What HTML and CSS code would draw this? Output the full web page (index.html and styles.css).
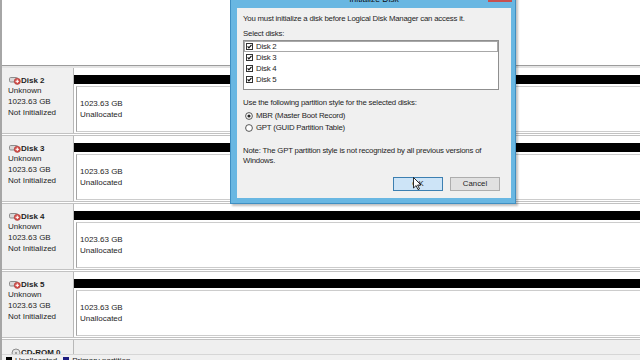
FILE: index.html
```html
<!DOCTYPE html>
<html lang="en">
<head>
    <meta charset="UTF-8">
    <meta name="viewport" content="width=device-width, initial-scale=1.0">
    <title>Disk Management</title>
    <link rel="stylesheet" href="styles.css">
</head>
<body>

    <div class="console">
        <div class="top-pane"></div>
        <div class="splitter"></div>

        <div class="disk-list">
            <div class="disk-row">
                <div class="disk-label">
                    <div class="disk-name">
                        <svg class="disk-icon" viewBox="0 0 12 9" width="12" height="9">
                            <rect x="0.5" y="1.5" width="8" height="4.5" rx="1.2" fill="#d9d9d9" stroke="#8c8c8c"/>
                            <circle cx="8.3" cy="5.3" r="3.1" fill="#d4504c" stroke="#a83a36" stroke-width="0.6"/>
                            <path d="M8.3 3.6v3.4M6.6 5.3h3.4" stroke="#fff" stroke-width="1"/>
                        </svg>
                        <span>Disk 2</span>
                    </div>
                    <div>Unknown</div>
                    <div>1023.63 GB</div>
                    <div>Not Initialized</div>
                </div>
                <div class="disk-map">
                    <div class="disk-bar"></div>
                    <div class="volume">
                        <div>1023.63 GB</div>
                        <div>Unallocated</div>
                    </div>
                </div>
            </div>

            <div class="disk-row">
                <div class="disk-label">
                    <div class="disk-name">
                        <svg class="disk-icon" viewBox="0 0 12 9" width="12" height="9">
                            <rect x="0.5" y="1.5" width="8" height="4.5" rx="1.2" fill="#d9d9d9" stroke="#8c8c8c"/>
                            <circle cx="8.3" cy="5.3" r="3.1" fill="#d4504c" stroke="#a83a36" stroke-width="0.6"/>
                            <path d="M8.3 3.6v3.4M6.6 5.3h3.4" stroke="#fff" stroke-width="1"/>
                        </svg>
                        <span>Disk 3</span>
                    </div>
                    <div>Unknown</div>
                    <div>1023.63 GB</div>
                    <div>Not Initialized</div>
                </div>
                <div class="disk-map">
                    <div class="disk-bar"></div>
                    <div class="volume">
                        <div>1023.63 GB</div>
                        <div>Unallocated</div>
                    </div>
                </div>
            </div>

            <div class="disk-row">
                <div class="disk-label">
                    <div class="disk-name">
                        <svg class="disk-icon" viewBox="0 0 12 9" width="12" height="9">
                            <rect x="0.5" y="1.5" width="8" height="4.5" rx="1.2" fill="#d9d9d9" stroke="#8c8c8c"/>
                            <circle cx="8.3" cy="5.3" r="3.1" fill="#d4504c" stroke="#a83a36" stroke-width="0.6"/>
                            <path d="M8.3 3.6v3.4M6.6 5.3h3.4" stroke="#fff" stroke-width="1"/>
                        </svg>
                        <span>Disk 4</span>
                    </div>
                    <div>Unknown</div>
                    <div>1023.63 GB</div>
                    <div>Not Initialized</div>
                </div>
                <div class="disk-map">
                    <div class="disk-bar"></div>
                    <div class="volume">
                        <div>1023.63 GB</div>
                        <div>Unallocated</div>
                    </div>
                </div>
            </div>

            <div class="disk-row">
                <div class="disk-label">
                    <div class="disk-name">
                        <svg class="disk-icon" viewBox="0 0 12 9" width="12" height="9">
                            <rect x="0.5" y="1.5" width="8" height="4.5" rx="1.2" fill="#d9d9d9" stroke="#8c8c8c"/>
                            <circle cx="8.3" cy="5.3" r="3.1" fill="#d4504c" stroke="#a83a36" stroke-width="0.6"/>
                            <path d="M8.3 3.6v3.4M6.6 5.3h3.4" stroke="#fff" stroke-width="1"/>
                        </svg>
                        <span>Disk 5</span>
                    </div>
                    <div>Unknown</div>
                    <div>1023.63 GB</div>
                    <div>Not Initialized</div>
                </div>
                <div class="disk-map">
                    <div class="disk-bar"></div>
                    <div class="volume">
                        <div>1023.63 GB</div>
                        <div>Unallocated</div>
                    </div>
                </div>
            </div>

            <div class="disk-row cdrom-row">
                <div class="disk-label">
                    <div class="disk-name">
                        <svg class="disk-icon cd-icon" viewBox="0 0 12 9" width="12" height="9">
                            <circle cx="7" cy="5" r="4" fill="#e4e4e4" stroke="#8c8c8c"/>
                            <circle cx="7" cy="5" r="1" fill="#8c8c8c"/>
                        </svg>
                        <span>CD-ROM 0</span>
                    </div>
                </div>
                <div class="disk-map"></div>
            </div>
        </div>

        <div class="legend">
            <span class="swatch swatch-black"></span>
            <span class="legend-text">Unallocated</span>
            <span class="swatch swatch-navy"></span>
            <span class="legend-text">Primary partition</span>
        </div>
    </div>

    <div class="dialog">
        <div class="dialog-title">Initialize Disk</div>
        <div class="close-btn"></div>
        <div class="dialog-body">
            <div class="intro">You must initialize a disk before Logical Disk Manager can access it.</div>
            <div class="field-label">Select disks:</div>
            <div class="disk-picker">
                <div class="pick-row selected">
                    <svg class="check" viewBox="0 0 7 7" width="7" height="7"><rect x="0.5" y="0.5" width="6" height="6" fill="#fff" stroke="#333"/><path d="M1.6 3.4l1.3 1.4 2.6-3" fill="none" stroke="#111" stroke-width="1.2"/></svg>
                    <span>Disk 2</span>
                </div>
                <div class="pick-row">
                    <svg class="check" viewBox="0 0 7 7" width="7" height="7"><rect x="0.5" y="0.5" width="6" height="6" fill="#fff" stroke="#333"/><path d="M1.6 3.4l1.3 1.4 2.6-3" fill="none" stroke="#111" stroke-width="1.2"/></svg>
                    <span>Disk 3</span>
                </div>
                <div class="pick-row">
                    <svg class="check" viewBox="0 0 7 7" width="7" height="7"><rect x="0.5" y="0.5" width="6" height="6" fill="#fff" stroke="#333"/><path d="M1.6 3.4l1.3 1.4 2.6-3" fill="none" stroke="#111" stroke-width="1.2"/></svg>
                    <span>Disk 4</span>
                </div>
                <div class="pick-row">
                    <svg class="check" viewBox="0 0 7 7" width="7" height="7"><rect x="0.5" y="0.5" width="6" height="6" fill="#fff" stroke="#333"/><path d="M1.6 3.4l1.3 1.4 2.6-3" fill="none" stroke="#111" stroke-width="1.2"/></svg>
                    <span>Disk 5</span>
                </div>
            </div>

            <div class="style-label">Use the following partition style for the selected disks:</div>
            <div class="radio-row first">
                <svg class="radio" viewBox="0 0 8 8" width="8" height="8"><circle cx="4" cy="4" r="3.4" fill="#fff" stroke="#444" stroke-width="0.9"/><circle cx="4" cy="4" r="1.6" fill="#222"/></svg>
                <span>MBR (Master Boot Record)</span>
            </div>
            <div class="radio-row">
                <svg class="radio" viewBox="0 0 8 8" width="8" height="8"><circle cx="4" cy="4" r="3.4" fill="#fff" stroke="#444" stroke-width="0.9"/></svg>
                <span>GPT (GUID Partition Table)</span>
            </div>

            <div class="note">Note: The GPT partition style is not recognized by all previous versions of<br>Windows.</div>

            <div class="buttons">
                <div class="btn btn-ok">OK</div>
                <div class="btn">Cancel</div>
            </div>
        </div>
    </div>

    <svg class="cursor" viewBox="0 0 9 13" width="9" height="13">
        <path d="M0.5 0.5v10.5l2.6-2.4 1.9 4 1.5-0.7-1.9-3.9h3.4z" fill="#fff" stroke="#000" stroke-width="0.8"/>
    </svg>

</body>
</html>
```

FILE: styles.css
```css
body {
    margin: 0;
    width: 640px;
    height: 360px;
    overflow: hidden;
    position: relative;
    background: #fff;
    color: #1e1e1e;
    font-family: "Liberation Sans", Arial, sans-serif;
    font-size: 8px;
}

.console {
    display: grid;
    grid-template-rows: 65px 3px 286px 20px;
    border-left: 2px solid #a6a6a6;
}

.top-pane {
    background: #fff;
}

.splitter {
    border-top: 1px solid #9c9c9c;
    background: #e4e4e4;
}

.disk-list {
    overflow: hidden;
}

.disk-row {
    display: flex;
    height: 68px;
    box-sizing: border-box;
    border-bottom: 3px double #c2c2c2;
}

.disk-label {
    width: 72px;
    box-sizing: border-box;
    background: #f0f0f0;
    border-right: 1px solid #b8b8b8;
    padding: 7.5px 0 0 6px;
    line-height: 10.7px;
}

.disk-name {
    display: flex;
    align-items: center;
    font-weight: bold;
}

.disk-icon {
    margin: 0 0 0 1px;
}

.disk-map {
    flex: 1;
    padding-top: 7px;
}

.disk-bar {
    height: 9px;
    background: #000;
}

.volume {
    margin: 2px 0 0 2px;
    height: 46px;
    box-sizing: border-box;
    border: 1px solid #cccccc;
    border-left-color: #a4a4a4;
    border-right: none;
    padding: 10.5px 0 0 3px;
    line-height: 11px;
    background: #fff;
}

.cdrom-row .disk-map {
    background: #efefef;
}

.legend {
    display: flex;
    align-items: flex-start;
    background: #f0f0f0;
    border-top: 1px solid #d6d6d6;
    padding: 2px 0 0 4px;
    line-height: 8px;
}

.swatch {
    width: 6px;
    height: 6px;
    margin-right: 3px;
}

.swatch-black {
    background: #000;
}

.swatch-navy {
    background: #1c1c80;
}

.legend-text {
    margin-right: 6px;
}

/* initialize disk dialog */
.dialog {
    position: absolute;
    left: 230px;
    top: -16px;
    width: 286px;
    height: 220px;
    box-sizing: border-box;
    background: #69b7e2;
    border: 1px solid #3f8fc2;
    padding: 0 4px 5px 6px;
    box-shadow: 2px 2px 2px rgba(0, 0, 0, 0.25);
}

.dialog-title {
    height: 23px;
    box-sizing: border-box;
    padding-top: 9px;
    line-height: 11px;
    text-align: center;
    font-size: 8.5px;
    color: #111;
}

.close-btn {
    position: absolute;
    left: 257px;
    top: 0;
    width: 24px;
    height: 17px;
    background: #c7504f;
}

.dialog-body {
    height: 190px;
    box-sizing: border-box;
    background: #f0f0f0;
    padding: 4.5px 11px 0 6px;
    line-height: 11px;
    font-size: 7.8px;
    letter-spacing: -0.2px;
    white-space: nowrap;
}

.field-label {
    margin-top: 4px;
}

.disk-picker {
    margin-top: 1.5px;
    width: 256px;
    height: 50px;
    box-sizing: border-box;
    border: 1px solid #8f8f8f;
    background: #fff;
}

.pick-row {
    display: flex;
    align-items: center;
    height: 11px;
    box-sizing: border-box;
    padding-left: 2px;
}

.pick-row.selected {
    border: 1px solid #a8a8a8;
    padding-left: 1px;
}

.check {
    margin-right: 3px;
}

.style-label {
    margin-top: 6.5px;
}

.radio-row {
    display: flex;
    align-items: center;
    height: 12px;
    padding-left: 2px;
}

.radio-row.first {
    margin-top: 2px;
}

.radio {
    margin-right: 3px;
}

.note {
    margin-top: 12px;
    line-height: 10px;
}

.buttons {
    display: flex;
    justify-content: flex-end;
    gap: 7px;
    margin-top: 11px;
}

.btn {
    width: 50px;
    height: 14px;
    box-sizing: border-box;
    border: 1px solid #adadad;
    background: #e1e1e1;
    text-align: center;
    line-height: 12px;
    letter-spacing: 0;
}

.btn-ok {
    border-color: #3c7fb1;
    background: #cde4f7;
}

.cursor {
    position: absolute;
    left: 413px;
    top: 177px;
}
```
